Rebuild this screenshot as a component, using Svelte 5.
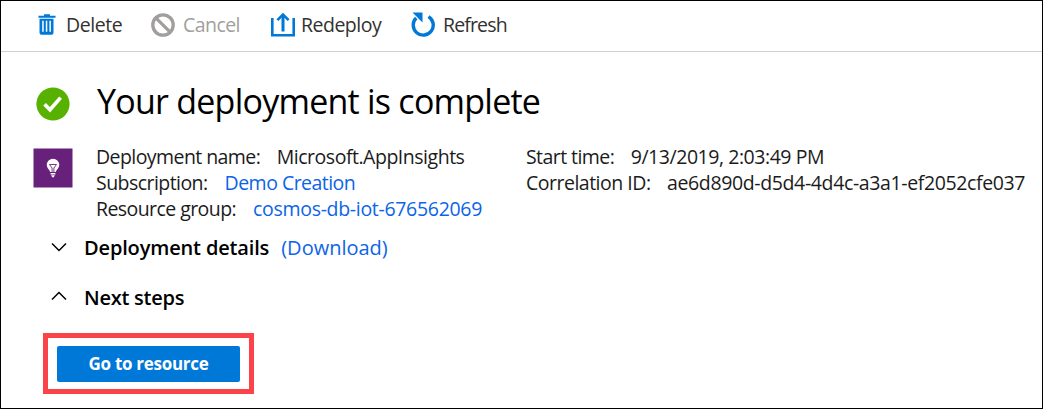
<script>
  const left = [
    { label: 'Deployment name:', value: 'Microsoft.AppInsights', gap: 16.5, ls: -0.57, vls: -0.48 },
    { label: 'Subscription:', value: 'Demo Creation', gap: 17, ls: -0.55, vls: -0.53, link: true },
    { label: 'Resource group:', value: 'cosmos-db-iot-676562069', gap: 17, ls: -0.57, vls: -0.31, link: true },
  ];
  const right = [
    { label: 'Start time:', value: '9/13/2019, 2:03:49 PM', gap: 16.5, ls: -0.57, vls: -0.45 },
    { label: 'Correlation ID:', value: 'ae6d890d-d5d4-4d4c-a3a1-ef2052cfe037', gap: 16.5, ls: -0.5, vls: -0.37 },
  ];
</script>

{#snippet facts(rows)}
  {#each rows as r}
    <div class="fact">
      <span style:letter-spacing="{r.ls}px">{r.label}</span>
      <span class:link={r.link} style:margin-left="{r.gap}px" style:letter-spacing="{r.vls}px">{r.value}</span>
    </div>
  {/each}
{/snippet}

<main>
  <nav>
    <button class="delete">
      <svg width="18" height="22" viewBox="0 0 18 22"><path fill="#0078d7" d="M6 .2h6v1.500h5.500v2H.5v-2H6zM1.500 4.700h14v14q0 2-2 2h-10q-2 0-2-2z"/><path fill="#fff" d="M4.200 6.700h1.500v11H4.200zM7.800 6.700h1.500v11H7.800zM11.400 6.700h1.500v11h-1.500z"/></svg>
      <span>Delete</span>
    </button>
    <button class="cancel">
      <svg width="24" height="24" viewBox="0 0 24 24" fill="none" stroke="#a19f9d" stroke-width="3.300"><circle cx="12" cy="12" r="10.200"/><path d="M4.800 4.800 19.200 19.200"/></svg>
      <span>Cancel</span>
    </button>
    <button class="redeploy">
      <svg width="26" height="25" viewBox="0 0 26 25" fill="none" stroke="#0078d7"><path stroke-width="2.600" d="M2.300 6V23.200H23.700V6"/><path stroke-width="3" d="M13 19.500V3"/><path stroke-width="2.600" d="M7.400 8.200 13 2.600 18.600 8.200"/></svg>
      <span>Redeploy</span>
    </button>
    <button class="refresh">
      <svg width="25" height="26" viewBox="0 0 25 26"><path fill="none" stroke="#0078d7" stroke-width="3.400" d="M17.500 5.600A10 10 0 1 1 5.200 7"/><path fill="#0078d7" d="M1.500 1.500H11.500V11.500z"/></svg>
      <span>Refresh</span>
    </button>
  </nav>

  <header>
    <svg width="34" height="34" viewBox="0 0 34 34"><circle cx="17" cy="17" r="16.600" fill="#57b100"/><path d="M8.600 17.200 14 22.800 24.600 10.600" fill="none" stroke="#fff" stroke-width="3.700"/></svg>
    <h1>Your deployment is complete</h1>
  </header>

  <section class="info">
    <svg class="badge" width="40" height="40" viewBox="0 0 40 40"><path fill="#68217a" d="M.5.500h39v39H.500z"/><path fill="#fff" d="M20 10.700a6.200 6.200 0 0 0-6.200 6.200c0 3.200 2.700 4.200 3.300 7.100h5.800c.6-2.900 3.300-3.900 3.300-7.100A6.200 6.200 0 0 0 20 10.700zM17.600 25h4.800v1.500h-4.800zM18.300 27.300h3.400v1h-.7v1h-2v-1h-.7z"/><path d="M19.100 24V20L16.500 16.500H23.500L20.900 20V24" fill="none" stroke="#68217a" stroke-width=".9"/></svg>
    <div class="left">{@render facts(left)}</div>
    <div class="right">{@render facts(right)}</div>
  </section>

  <section class="toggle details">
    <svg width="16" height="10" viewBox="0 0 16 10"><path d="M1 1.500 8 8.500 15 1.500"/></svg>
    <h2>Deployment details</h2>
    <span class="link download">(Download)</span>
  </section>
  <section class="toggle next">
    <svg width="16" height="10" viewBox="0 0 16 10"><path d="M1 8.500 8 1.500 15 8.500"/></svg>
    <h2>Next steps</h2>
  </section>

  <div class="highlight"><button class="primary">Go to resource</button></div>
</main>

<style>
  :global(body) { background: #fff; }
  main {
    box-sizing: border-box;
    width: 1043px;
    height: 409px;
    border: 1px solid #000;
    overflow: hidden;
    font-family: "Open Sans", "Noto Sans", sans-serif;
    font-size: 19.500px;
    color: #1b1b1b;
    white-space: nowrap;
  }
  svg { flex: none; display: block; }
  button { border: 0; padding: 0; background: none; font: inherit; color: inherit; }
  nav {
    display: flex;
    height: 51px;
    box-sizing: border-box;
    border-bottom: 1px solid #d2d0ce;
    padding-left: 37px;
  }
  nav button { display: flex; align-items: center; height: 47px; color: #323130; }
  .delete { width: 113px; gap: 10px; letter-spacing: -0.450px; }
  .cancel { width: 119px; gap: 8px; letter-spacing: -0.550px; }
  .cancel span { color: #a19f9d; }
  .redeploy { width: 141px; gap: 5px; letter-spacing: -0.500px; }
  .refresh { gap: 7px; letter-spacing: -0.850px; }
  .refresh svg { margin-top: -1px; }
  header { display: flex; align-items: center; height: 50px; padding: 25px 0 0 35px; }
  header svg { margin-top: 3px; }
  h1 { margin: -3px 0 0 27px; font-size: 34px; font-weight: 400; line-height: 50px; letter-spacing: -0.760px; color: #000; }
  .info { display: flex; height: 78px; padding: 17px 0 0 32px; }
  .badge { margin-top: 4px; }
  .left { width: 430px; margin-left: 23px; }
  .fact { display: flex; height: 26px; line-height: 26px; }
  .link { color: #0c64e8; }
  .toggle { display: flex; align-items: center; height: 30px; padding-left: 50px; }
  .toggle svg { fill: none; stroke: #000; stroke-width: 1.500; }
  h2 { margin: 0 0 0 17px; font-size: 20px; font-weight: 600; letter-spacing: -0.150px; color: #000; }
  .details { margin-top: 10px; }
  .download { margin-left: 12px; font-size: 20px; letter-spacing: 0; }
  .next { margin-top: 20px; }
  .next svg { margin-top: -2px; }
  .next h2 { letter-spacing: -0.250px; }
  .highlight {
    display: flex;
    align-items: center;
    justify-content: center;
    box-sizing: border-box;
    width: 211px;
    height: 61px;
    margin: 21px 0 0 42px;
    border: 5px solid #fc4349;
  }
  .primary { width: 183px; height: 36px; border-radius: 2px; background: #0078d7; color: #fff; font-size: 17px; font-weight: 700; letter-spacing: -0.300px; }
</style>
